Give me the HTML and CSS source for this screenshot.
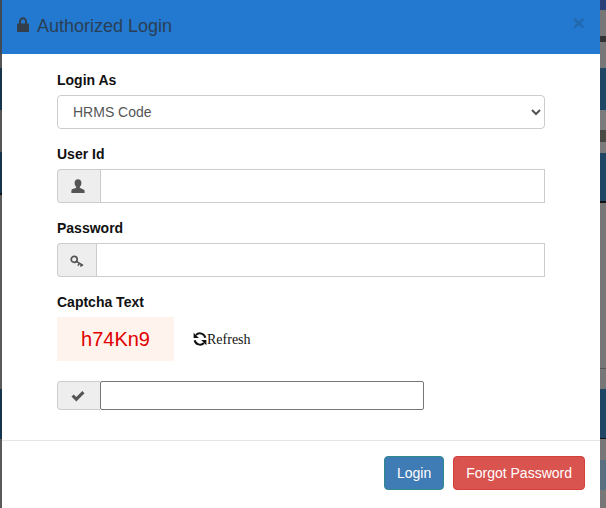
FILE: index.html
```html
<!DOCTYPE html>
<html lang="en">
<head>
<meta charset="utf-8">
<title>Authorized Login</title>
<link rel="stylesheet" href="styles.css">
</head>
<body>
<div class="stage">
  <div class="strip strip-left"></div>
  <main class="modal">
    <header class="modal-header">
      <h4 class="modal-title">
        <svg class="lock" viewBox="0 0 12 14" preserveAspectRatio="none" aria-hidden="true"><path d="M2 6V4.200a4 4 0 0 1 8 0V6h.8c.7 0 1.200.5 1.200 1.200v5.600c0 .7-.5 1.200-1.200 1.200H1.200C.5 14 0 13.500 0 12.800V7.200C0 6.500.5 6 1.200 6zM4 6h4V4.200a2 2 0 0 0-4 0z" fill-rule="evenodd"/></svg>
        <span>Authorized Login</span>
      </h4>
      <button class="close" type="button">×</button>
    </header>
    <form class="modal-body">
      <div class="group">
        <label class="lbl">Login As</label>
        <select class="select"><option>HRMS Code</option></select>
      </div>
      <div class="group">
        <label class="lbl">User Id</label>
        <div class="input-group">
          <span class="addon addon-wide addon-left"><svg class="ico" viewBox="0 0 14 14"><path d="M7 .2c2.200 0 3.400 1.600 3.400 3.700 0 1.600-.7 3-1.500 3.800-.3.400-.2 1 .3 1.300l3.200 1.500c.7.300 1.200.8 1.200 1.500V14H.4v-2.500c0-.7.5-1.200 1.200-1.500l3.200-1c.5-.3.600-.9.300-1.300C4.300 6.900 3.600 5.500 3.600 3.900 3.600 1.800 4.800.2 7 .2z"/></svg></span>
          <input class="input" type="text">
        </div>
      </div>
      <div class="group">
        <label class="lbl">Password</label>
        <div class="input-group">
          <span class="addon addon-narrow addon-low"><svg class="ico" viewBox="0 0 14 14"><circle cx="4.200" cy="4.400" r="3" fill="none" stroke="#555" stroke-width="1.700"/><path d="M6.400 6.300l6.600 4.200M9.400 8.300l-1.500 2.400M11.600 9.700l-1.100 1.900" fill="none" stroke="#555" stroke-width="1.600"/></svg></span>
          <input class="input" type="password">
        </div>
      </div>
      <div class="group captcha-group">
        <label class="lbl">Captcha Text</label>
        <div class="captcha-row">
          <div class="captcha">h74Kn9</div>
          <a class="refresh"><svg class="refresh-ico" viewBox="0 0 14 14"><path d="M12.300 5.800A5.500 5.500 0 0 0 3 3" fill="none" stroke="#111" stroke-width="2"/><path d="M.6 .8v5.200h5.200z" fill="#111"/><path d="M1.700 8.200A5.500 5.500 0 0 0 11 11" fill="none" stroke="#111" stroke-width="2"/><path d="M13.400 13.200V8H8.200z" fill="#111"/></svg><span>Refresh</span></a>
        </div>
      </div>
      <div class="input-group captcha-input">
        <span class="addon addon-wide addon-left"><svg class="ico" viewBox="0 0 14 14"><path d="M.5 7.600l2.200-2.200 2.600 2.600L11.300 2l2.200 2.200-8.200 8.200z"/></svg></span>
        <input class="input input-dark" type="text">
      </div>
    </form>
    <footer class="modal-footer">
      <button class="btn btn-primary" type="button">Login</button>
      <button class="btn btn-danger" type="button">Forgot Password</button>
    </footer>
  </main>
  <div class="strip strip-right"></div>
</div>
</body>
</html>
```
FILE: styles.css
```css
* { box-sizing: border-box; }
html, body { margin: 0; padding: 0; }
body { width: 606px; height: 508px; overflow: hidden; background: #777; font-family: "Liberation Sans", Arial, sans-serif; }
.stage { display: flex; width: 606px; height: 508px; }
.strip { flex: none; }
.strip-left { width: 2px; background: linear-gradient(#3f4a55 0, #3f4a55 54px, #555 54px, #555 68px, #16344c 68px, #16344c 110px, #555 110px, #555 152px, #16344c 152px, #16344c 193px, #111 193px, #111 195px, #5a5a5a 195px, #5a5a5a 389px, #16344c 389px, #16344c 439px, #5a5a5a 439px); }
.strip-right { width: 6px; background: linear-gradient(#2a3f78 0, #2a3f78 10px, #777 10px, #777 36px, #333 36px, #333 42px, #777 42px, #777 68px, #1f4664 68px, #1f4664 110px, #7b7b7b 110px, #7b7b7b 130px, #4a4a44 130px, #4a4a44 142px, #7b7b7b 142px, #7b7b7b 153px, #1f4664 153px, #1f4664 201px, #111 201px, #111 203px, #777 203px, #777 368px, #555 368px, #555 369px, #777 369px, #777 389px, #1f4664 389px, #1f4664 438px, #111 438px, #111 439px, #777 439px, #777 460px, #5a7080 460px, #5a7080 490px, #777 490px); }
.modal { flex: 1; display: flex; flex-direction: column; background: #fff; min-width: 0; }
.modal-header { height: 54px; background: #2379cf; display: flex; align-items: center; justify-content: space-between; padding: 0 15px 2px 15px; }
.modal-title { margin: 0; display: flex; align-items: center; gap: 8px; font-size: 18px; font-weight: 400; color: #2a3e55; }
.lock { width: 12px; height: 15px; fill: #333f4b; margin-bottom: 3px; }
.close { border: 0; background: none; padding: 0; font: 700 21px/1 "Liberation Sans", Arial, sans-serif; color: #2168ae; margin-top: -8px; }
.modal-body { flex: 1; padding: 16px 55px 0; }
.group { margin-bottom: 15px; }
.lbl { display: block; font-size: 14px; font-weight: 700; line-height: 20px; margin-bottom: 5px; color: #111; }
.select { display: block; width: 100%; height: 34px; border: 1px solid #ccc; border-radius: 4px; background: #fff; color: #555; font: 14px "Liberation Sans", Arial, sans-serif; padding: 6px 11px; }
.input-group { display: flex; height: 34px; }
.addon { flex: none; display: flex; align-items: center; justify-content: center; background: #eee; border: 1px solid #ccc; border-right: 0; border-radius: 4px 0 0 4px; }
.addon-wide { width: 43px; }
.addon-narrow { width: 39px; }
.addon-left { padding-right: 3px; }
.addon-low { padding-top: 4px; }
.ico { width: 14px; height: 14px; fill: #555; }
.input { flex: 1; min-width: 0; border: 1px solid #ccc; background: #fff; padding: 6px 12px; }
.captcha-group { margin-bottom: 20px; }
.captcha-row { display: flex; align-items: center; }
.captcha { width: 117px; height: 44px; background: #fff3ee; color: #e00000; font-size: 20px; display: flex; align-items: center; justify-content: center; }
.refresh { margin-left: 19px; padding-top: 2px; display: flex; align-items: center; font: 14px "Liberation Serif", "Times New Roman", serif; color: #111; }
.refresh-ico { width: 14px; height: 14px; margin-top: -3px; }
.captcha-input { width: 367px; height: 29px; }
.input-dark { border-color: #767676; border-radius: 2px; }
.modal-footer { height: 68px; border-top: 1px solid #e5e5e5; display: flex; justify-content: flex-end; align-items: flex-start; gap: 9px; padding: 15px 15px 0; }
.btn { height: 34px; border-radius: 4px; border: 1px solid; color: #fff; font: 14px "Liberation Sans", Arial, sans-serif; padding: 6px 12px; }
.btn-primary { background: #3f7bb5; border-color: #2e8a8a; }
.btn-danger { background: #d9534f; border-color: #d43f3a; }
```
